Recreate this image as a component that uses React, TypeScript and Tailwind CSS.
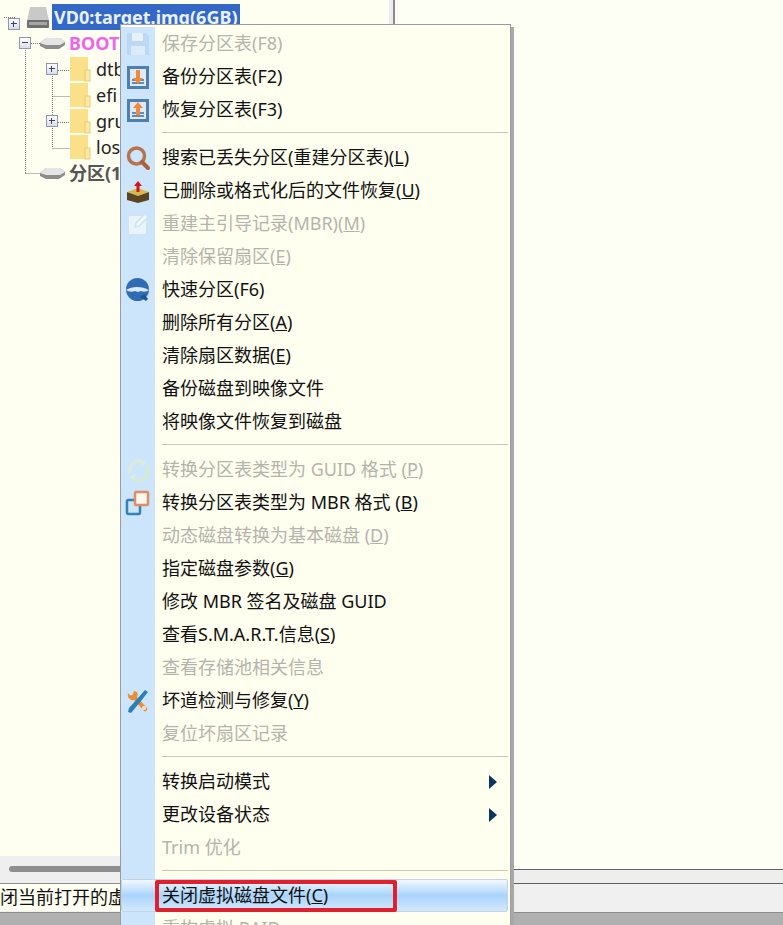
import React from "react"

const font = { fontFamily: '"Noto Sans", "Noto Sans CJK SC", sans-serif' }

type Item = {
  label?: string
  hot?: string
  off?: boolean
  icon?: React.ReactNode
  sub?: boolean
  sep?: boolean
  active?: boolean
}

function Svg({ children }: { children: React.ReactNode }) {
  return (
    <svg width="26" height="26" viewBox="0 0 26 26" fill="none">
      {children}
    </svg>
  )
}

const SaveIcon = (
  <Svg>
    <path d="M2 2h19l3 3v19H2z" fill="#bcd8f2" />
    <rect x="7" y="2" width="11" height="8" fill="#e6f1fb" />
    <rect x="6" y="15" width="14" height="9" fill="#dcebf9" />
  </Svg>
)

function TableIcon({ up }: { up?: boolean }) {
  return (
    <Svg>
      <rect x="2" y="2" width="22" height="23" fill="#4f7fae" />
      <rect x="5" y="5" width="16" height="17" fill="#dfeaf5" />
      <path d="M7 16h12M7 19h12" stroke="#3d6d9f" strokeWidth="1.5" />
      {up ? (
        <path d="M13 5l5 6h-3v7h-4v-7H8z" fill="#f08a3c" />
      ) : (
        <path d="M13 20l5-6h-3V6h-4v8H8z" fill="#f08a3c" />
      )}
    </Svg>
  )
}

const SearchIcon = (
  <Svg>
    <circle cx="11.5" cy="11" r="8" stroke="#b5734f" strokeWidth="3.5" />
    <path d="M17 17l6 6" stroke="#a9603c" strokeWidth="4" strokeLinecap="round" />
  </Svg>
)

const RestoreIcon = (
  <Svg>
    <path d="M2 14l11-4 11 4-11 4z" fill="#d9b84a" />
    <path d="M2 14v8l11 3 11-3v-8l-11 4z" fill="#5c4322" />
    <path d="M13 3l4 5h-2.5v6h-3V8H9z" fill="#d0161c" />
  </Svg>
)

const NoteIcon = (
  <Svg>
    <rect x="3" y="4" width="19" height="20" rx="2" stroke="#cfe3f3" strokeWidth="2" fill="#e9f3fa" />
    <path d="M10 16l1-4 9-9 3 3-9 9z" fill="#f4f9fc" stroke="#cfe3f3" strokeWidth="1.5" />
  </Svg>
)

const QuickIcon = (
  <Svg>
    <circle cx="12.5" cy="12.5" r="11.5" fill="#2f6cb3" />
    <path d="M1 13c6-4 16-4 23 0-3 2-5 2-8 1l-3 1-3-1c-3 1-6 1-9-1z" fill="#dbe8f5" />
    <path d="M15 20l6 4 2-2-4-5z" fill="#1f558f" />
  </Svg>
)

const GuidIcon = (
  <Svg>
    <path d="M5 16a9 9 0 0 1 12-11" stroke="#dceadd" strokeWidth="3.5" />
    <path d="M21 9a9 9 0 0 1-12 13" stroke="#d6ead0" strokeWidth="3.5" />
    <path d="M16 2l5 4-5 3zM10 24l-5-4 5-3z" fill="#dcebdc" />
  </Svg>
)

const MbrIcon = (
  <Svg>
    <rect x="2" y="10" width="13" height="14" rx="1.5" stroke="#2f83b5" strokeWidth="2.5" />
    <rect x="10" y="2" width="13" height="13" rx="1" fill="#fbf8ee" stroke="#e38a68" strokeWidth="2.5" />
  </Svg>
)

const RepairIcon = (
  <Svg>
    <path d="M3 5c2 3 4 3 5 1l1-3c3 0 5 3 3 6l10 11c1 2-1 4-3 3L9 12c-3 1-7-2-6-7z" fill="#ea8d37" />
    <path d="M23 4l-3-2-7 8-9 10-1 4 3 1 10-12z" fill="#2a7fb8" />
    <circle cx="19" cy="20" r="2" fill="#f7e4d2" />
  </Svg>
)

const items: Item[] = [
  { label: "保存分区表(F8)", off: true, icon: SaveIcon },
  { label: "备份分区表(F2)", icon: <TableIcon /> },
  { label: "恢复分区表(F3)", icon: <TableIcon up /> },
  { sep: true },
  { label: "搜索已丢失分区(重建分区表)(", hot: "L", icon: SearchIcon },
  { label: "已删除或格式化后的文件恢复(", hot: "U", icon: RestoreIcon },
  { label: "重建主引导记录(MBR)(", hot: "M", off: true, icon: NoteIcon },
  { label: "清除保留扇区(", hot: "E", off: true },
  { label: "快速分区(F6)", icon: QuickIcon },
  { label: "删除所有分区(", hot: "A" },
  { label: "清除扇区数据(", hot: "E" },
  { label: "备份磁盘到映像文件" },
  { label: "将映像文件恢复到磁盘" },
  { sep: true },
  { label: "转换分区表类型为 GUID 格式 (", hot: "P", off: true, icon: GuidIcon },
  { label: "转换分区表类型为 MBR 格式 (", hot: "B", icon: MbrIcon },
  { label: "动态磁盘转换为基本磁盘 (", hot: "D", off: true },
  { label: "指定磁盘参数(", hot: "G" },
  { label: "修改 MBR 签名及磁盘 GUID" },
  { label: "查看S.M.A.R.T.信息(", hot: "S" },
  { label: "查看存储池相关信息", off: true },
  { label: "坏道检测与修复(", hot: "Y", icon: RepairIcon },
  { label: "复位坏扇区记录", off: true },
  { sep: true },
  { label: "转换启动模式", sub: true },
  { label: "更改设备状态", sub: true },
  { label: "Trim 优化", off: true },
  { sep: true },
  { label: "关闭虚拟磁盘文件(", hot: "C", active: true },
  { label: "重构虚拟 RAID", off: true },
]

function MenuRow({ item }: { item: Item }) {
  if (item.sep) {
    return (
      <div className="flex h-[15px]">
        <div className="w-[34px] bg-[#cde5fb]" />
        <div className="flex-1 pl-[7px] pr-[2px] pt-[6px]">
          <div className="h-px bg-[#c9c7b4]" />
        </div>
      </div>
    )
  }
  return (
    <div
      className={
        item.active
          ? "relative flex h-[33px] items-center border border-[#c4d3e2] bg-gradient-to-b from-[#f3f9ff] via-[#a9d4fb] to-[#d3e9fd] rounded-[2px] mr-[2px]"
          : "relative flex h-[33px] items-center"
      }
    >
      <div
        className={
          item.active
            ? "flex h-full w-[33px] items-center justify-center"
            : "flex h-full w-[34px] items-center justify-center bg-[#cde5fb]"
        }
      >
        {item.icon}
      </div>
      <div
        className={
          item.off
            ? "whitespace-nowrap pl-[7px] text-[18px] text-[#b4b4ac]"
            : "whitespace-nowrap pl-[7px] text-[18px] text-[#111111]"
        }
      >
        {item.label}
        {item.hot && (
          <>
            <u>{item.hot}</u>)
          </>
        )}
      </div>
      {item.sub && (
        <svg className="absolute right-[13px] top-[10px]" width="8" height="14" viewBox="0 0 8 14">
          <path d="M0 0l8 7-8 7z" fill="#0b3560" />
        </svg>
      )}
      {item.active && (
        <div className="absolute left-[33px] top-[0px] h-[32px] w-[242px] rounded-[2px] border-[4px] border-[#e0202c]" />
      )}
    </div>
  )
}

function Box({ open, className }: { open?: boolean; className: string }) {
  return (
    <span
      className={`relative inline-block h-[12px] w-[12px] border border-[#8f97ad] bg-gradient-to-b from-[#ffffff] to-[#dcdce8] ${className}`}
    >
      <span className="absolute left-[2px] top-[4px] h-px w-[6px] bg-[#3a4468]" />
      {!open && <span className="absolute left-[4px] top-[2px] h-[6px] w-px bg-[#3a4468]" />}
    </span>
  )
}

const DiskSmall = (
  <svg width="25" height="12" viewBox="0 0 25 12">
    <path d="M0 6l6-5h14l5 4v3l-6 4H6L0 9z" fill="#8d8d8d" />
    <path d="M0 6l6-5h14l5 4-5 3H6z" fill="#e4e4e4" />
  </svg>
)

const Folder = (
  <svg width="21" height="25" viewBox="0 0 21 25">
    <rect x="0" y="0" width="18" height="24" fill="#fbe08a" />
    <rect x="15" y="13" width="5" height="11" fill="#fde9a6" stroke="#e8cb72" />
  </svg>
)

function FolderRow({ name, plus }: { name: string; plus?: boolean }) {
  return (
    <div className="flex h-[26px] items-center">
      <div className="w-[46px] shrink-0" />
      <div className="w-[24px] shrink-0">{plus && <Box className="block" />}</div>
      {Folder}
      <span className="ml-[5px] text-[18px] text-[#222222]">{name}</span>
    </div>
  )
}

function Tree() {
  return (
    <div className="relative flex-1 overflow-hidden pt-[4px]">
      <svg className="absolute left-0 top-0" width="80" height="190" fill="none" stroke="#777777" strokeDasharray="1 1">
        <path d="M4 17.5h11M25.5 50v124M25.5 173.5h15M31 43.5h9M52.5 76v72M58 70.5h12M52.5 96.5h17M58 122.5h12M52.5 148.5h17" />
      </svg>
      <div className="relative flex h-[26px] items-center pl-[15px]">
        <Box className="absolute -left-[7px] top-[7px]" />
        <svg width="22" height="21" viewBox="0 0 22 21">
          <path d="M3 0h16l3 14H0z" fill="#c9c9c9" />
          <rect x="0" y="13" width="22" height="8" rx="1" fill="#6f6f6f" />
          <rect x="2" y="15" width="18" height="3" fill="#a6a6a6" />
        </svg>
        <span className="ml-[3px] bg-[#3368c7] px-[2px] text-[18px] font-bold leading-[26px] text-[#e9f1fb]">
          VD0:target.img(6GB)
        </span>
      </div>
      <div className="relative flex h-[26px] items-center pl-[19px]">
        <Box open className="mr-[9px] block shrink-0" />
        {DiskSmall}
        <span className="ml-[4px] text-[18px] font-bold text-[#ee66e6]">BOOT</span>
      </div>
      <div className="relative">
        <FolderRow name="dtb" plus />
        <FolderRow name="efi" />
        <FolderRow name="grub" plus />
        <FolderRow name="lost+found" />
      </div>
      <div className="relative flex h-[26px] items-center pl-[40px]">
        {DiskSmall}
        <span className="ml-[4px] whitespace-nowrap text-[18px] font-bold text-[#555555]">分区(1)</span>
      </div>
    </div>
  )
}

export default function App() {
  return (
    <div className="relative flex h-[925px] w-[783px] flex-col overflow-hidden bg-[#fffff1]" style={font}>
      <div className="flex h-[884px]">
        <div className="flex w-[389px] flex-col">
          <Tree />
          <div className="h-[28px] border-b border-[#8c8c8c] bg-[#efefef] pl-[9px] pt-[10px]">
            <div className="h-[6px] w-[300px] rounded-full bg-[#8e8e8e]" />
          </div>
        </div>
        <div className="w-[6px] border-r-2 border-[#8a8a8a] bg-[#ececf0]" />
        <div className="flex flex-1 flex-col">
          <div className="flex-1 border-b border-[#606060] bg-[#fdfff4]" />
          <div className="h-[14px] border-b border-[#606060] bg-[#eeeeee]" />
        </div>
      </div>
      <div className="h-[28px] overflow-hidden bg-[#f0f0f0] text-[18px] leading-[27px] text-[#111111]">
        <span className="block w-[120px] overflow-hidden whitespace-nowrap bg-[#fffff1]">闭当前打开的虚拟磁盘</span>
      </div>
      <div className="flex-1 border-t border-[#8c8c8c] bg-[#b0b0b0]" />

      {/* right click menu */}
      <div className="absolute left-[120px] top-[24px] w-[391px] border border-[#9b9b9b] bg-[#fffff0] pt-[2px] shadow-[3px_3px_0_#a8a8a8]">
        {items.map((item, i) => (
          <MenuRow key={i} item={item} />
        ))}
      </div>
    </div>
  )
}
